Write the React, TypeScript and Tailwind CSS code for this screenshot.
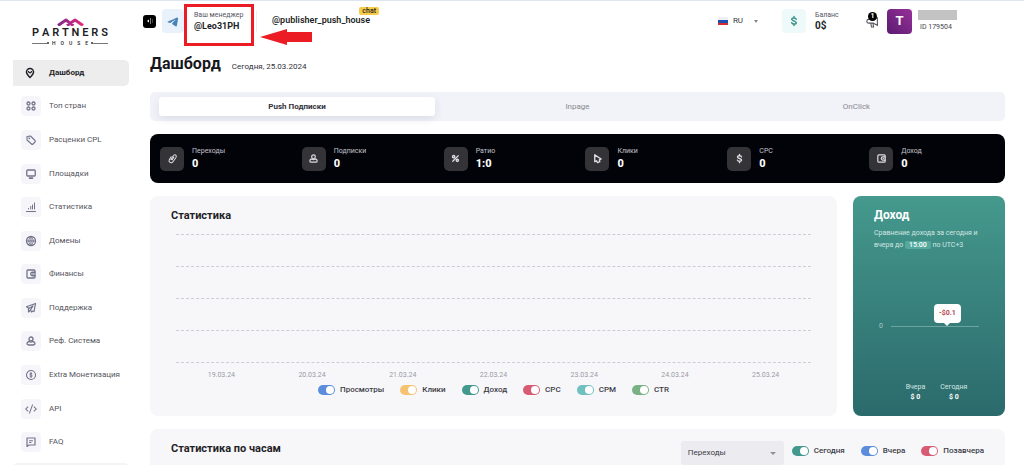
import { useState, type ReactNode } from 'react';
import { RiCodeSSlashLine, RiTelegram2Fill } from 'react-icons/ri';
import clsx from 'clsx';

type IconProps = { className?: string };

function Icon({ className, children }: { className?: string; children: ReactNode }) {
  return (
    <svg
      viewBox="0 0 24 24"
      fill="none"
      stroke="currentColor"
      strokeWidth="2.6"
      strokeLinecap="round"
      strokeLinejoin="round"
      className={className}
      aria-hidden="true"
    >
      {children}
    </svg>
  );
}

const PinIcon = (p: IconProps) => (
  <Icon {...p}>
    <path d="M12 21C8 17 5 14 5 10a7 7 0 0 1 14 0c0 4-3 7-7 11z" strokeWidth="3" />
    <path d="M9 9c1 3.500 5 3.500 6 0" />
  </Icon>
);

const GridIcon = (p: IconProps) => (
  <Icon {...p}>
    <circle cx="7" cy="7" r="3" />
    <circle cx="17" cy="7" r="3" />
    <circle cx="7" cy="17" r="3" />
    <circle cx="17" cy="17" r="3" />
  </Icon>
);

const TagIcon = (p: IconProps) => (
  <Icon {...p}>
    <path d="M4 5l7-1 9 9c1 1 1 2 0 3l-4 4c-1 1-2 1-3 0l-9-8z" strokeWidth="2.200" />
    <path d="m8 8 1 1" />
  </Icon>
);

const MonitorIcon = (p: IconProps) => (
  <Icon {...p}>
    <rect x="3.500" y="4" width="17" height="12" rx="2" />
    <path d="M9 20h6" strokeWidth="3.500" />
  </Icon>
);

const BarsIcon = (p: IconProps) => (
  <Icon {...p}>
    <path d="M3 21h18M7 15v1M11.500 11v5M15 8v8M19 4v12" strokeWidth="2" />
  </Icon>
);

const GlobeIcon = (p: IconProps) => (
  <Icon {...p}>
    <circle cx="12" cy="12" r="9" />
    <path d="M3 12h18M12 3v18M12 3c-6 5-6 13 0 18M12 3c6 5 6 13 0 18" strokeWidth="2" />
  </Icon>
);

const WalletIcon = (p: IconProps) => (
  <Icon {...p}>
    <rect x="4" y="4" width="16" height="16" rx="2" />
    <path d="M20 8.500h-5a3.500 3.500 0 0 0 0 7h5M15.500 12h1" />
  </Icon>
);

const PlaneIcon = (p: IconProps) => (
  <Icon {...p}>
    <path d="M21 3 3 9.500l5 3.500 8-5-5 8 2 4 3-2 2 1z" strokeWidth="2.400" />
    <path d="M7 14v6l3-3" strokeWidth="2.400" />
  </Icon>
);

const UserIcon = (p: IconProps) => (
  <Icon {...p}>
    <circle cx="12" cy="8" r="4" />
    <path d="M8.500 13c-3 .5-4.500 2-4.500 4.200 0 2 1.200 2.800 3.500 2.800h9c2.300 0 3.500-.8 3.500-2.800 0-2.200-1.500-3.700-4.500-4.200-2 1.500-5 1.500-7 0z" />
  </Icon>
);

const CoinIcon = (p: IconProps) => (
  <Icon {...p}>
    <circle cx="12" cy="12" r="9" strokeWidth="2.200" />
    <path d="M14.500 9.500c-1-1.500-5-1.500-5 .6 0 2.200 5 1.500 5 3.800 0 2.200-4 2.200-5 .6M12 7v10" strokeWidth="2" />
  </Icon>
);

const ChatIcon = (p: IconProps) => (
  <Icon {...p}>
    <path d="M4 4h16v14H8l-4 3z" strokeWidth="2.400" />
    <path d="M9 9.500h6M9 13h3" strokeWidth="2" />
  </Icon>
);

const LinkIcon = (p: IconProps) => (
  <Icon {...p}>
    <path d="m9 14 4-7c2-3 4-4 6-3 2 2 2 4 0 7l-6 8c-2 3-5 3-7 1-2-1-2-3-1-5l4-7" strokeWidth="2.200" />
    <path d="m9 14 2 1 4-6" strokeWidth="2.200" />
  </Icon>
);

const PercentIcon = (p: IconProps) => (
  <Icon {...p}>
    <path d="m18 6-12 12" />
    <circle cx="8" cy="8" r="2.500" strokeWidth="3" />
    <circle cx="16" cy="16" r="2.500" strokeWidth="3" />
  </Icon>
);

const CursorIcon = (p: IconProps) => (
  <Icon {...p}>
    <path d="M6 4v15l4-2 2 4 5-2-1-4 4-2z" strokeWidth="3" />
  </Icon>
);

const DollarIcon = (p: IconProps) => (
  <Icon {...p}>
    <path d="M16.500 8.500c-1-3.500-9-3.500-9 0s9 3.500 9 7-8 3.500-9 0M12 3v3M12 18v3" strokeWidth="3" />
  </Icon>
);

const navItems = [
  { label: 'Топ стран', icon: GridIcon },
  { label: 'Расценки CPL', icon: TagIcon },
  { label: 'Площадки', icon: MonitorIcon },
  { label: 'Статистика', icon: BarsIcon },
  { label: 'Домены', icon: GlobeIcon },
  { label: 'Финансы', icon: WalletIcon },
  { label: 'Поддержка', icon: PlaneIcon },
  { label: 'Реф. Система', icon: UserIcon },
  { label: 'Extra Монетизация', icon: CoinIcon },
  { label: 'API', icon: RiCodeSSlashLine },
  { label: 'FAQ', icon: ChatIcon },
];

const tabs = ['Push Подписки', 'Inpage', 'OnClick'];

const totals = [
  { label: 'Переходы', value: '0', icon: LinkIcon },
  { label: 'Подписки', value: '0', icon: UserIcon },
  { label: 'Ратио', value: '1:0', icon: PercentIcon },
  { label: 'Клики', value: '0', icon: CursorIcon },
  { label: 'CPC', value: '0', icon: DollarIcon },
  { label: 'Доход', value: '0', icon: WalletIcon },
];

const dates = ['19.03.24', '20.03.24', '21.03.24', '22.03.24', '23.03.24', '24.03.24', '25.03.24'];

const series = [
  { label: 'Просмотры', color: 'bg-[#5c8ddc]' },
  { label: 'Клики', color: 'bg-[#f6c271]' },
  { label: 'Доход', color: 'bg-[#43998e]' },
  { label: 'CPC', color: 'bg-[#d75c73]' },
  { label: 'CPM', color: 'bg-[#70c0c0]' },
  { label: 'CTR', color: 'bg-[#79b184]' },
];

const days = [
  { label: 'Сегодня', color: 'bg-[#43998e]' },
  { label: 'Вчера', color: 'bg-[#5c8ddc]' },
  { label: 'Позавчера', color: 'bg-[#d75c73]' },
];

function Toggle({ label, color }: { label: string; color: string }) {
  const [on, setOn] = useState(true);
  return (
    <label className="flex cursor-pointer items-center gap-[5px] text-[8px] leading-[12px] font-medium text-[#3c3c46]">
      <input
        type="checkbox"
        role="switch"
        checked={on}
        onChange={(e) => setOn(e.target.checked)}
        className="peer sr-only"
      />
      <span
        className={clsx(
          'flex h-[10px] w-[17px] items-center rounded-full px-px',
          on ? 'justify-end' : 'justify-start',
          on ? color : 'bg-gray-300'
        )}
      >
        <span className="size-[8px] rounded-full bg-white" />
      </span>
      {label}
    </label>
  );
}

function Logo() {
  return (
    <a href="#" className="mx-auto flex w-[80px] flex-col items-center text-[#1d1d26]">
      <svg viewBox="0 0 54 16" className="h-[8px] w-[27px]" fill="none" aria-hidden="true">
        <defs>
          <linearGradient id="roof" x1="0" x2="54" y1="0" y2="0" gradientUnits="userSpaceOnUse">
            <stop stopColor="#7b2a8e" />
            <stop offset="1" stopColor="#ec2a7b" />
          </linearGradient>
        </defs>
        <path
          d="M2 15 18 4l10 8M20 15 36 4l16 11M28 12l5 3"
          stroke="url(#roof)"
          strokeWidth="6"
          strokeLinejoin="round"
        />
      </svg>
      <span className="flex w-[76px] justify-between text-[11px] leading-[14px] font-semibold">
        {'PARTNERS'.split('').map((c, i) => (
          <span key={i}>{c}</span>
        ))}
      </span>
      <span className="flex w-[76px] items-center text-[5px] leading-[6px] font-medium">
        <span className="h-px flex-1 bg-[#777]" />
        <span className="size-[2px] rounded-full bg-[#333]" />
        <span className="flex w-[42px] justify-between px-[3px]">
          {'HOUSE'.split('').map((c, i) => (
            <span key={i}>{c}</span>
          ))}
        </span>
        <span className="size-[2px] rounded-full bg-[#333]" />
        <span className="h-px flex-1 bg-[#777]" />
      </span>
    </a>
  );
}

function Sidebar() {
  return (
    <aside className="w-[150px] shrink-0 pt-[17px] pr-[21px] pl-[13px]">
      <div className="flex h-[38px] items-start pr-[2px]">
        <Logo />
      </div>
      <nav>
        <ul className="grid min-h-[403px] auto-rows-fr items-center">
          <li>
            <a
              href="#"
              className="flex h-[26px] items-center gap-[13px] rounded-r-[5px] bg-[#ededed] pl-[11px] text-[8px] font-bold text-[#1f1f27]"
            >
              <PinIcon className="size-[12px]" />
              Дашборд
            </a>
          </li>
          {navItems.map(({ label, icon: ItemIcon }) => (
            <li key={label}>
              <a href="#" className="flex items-center gap-[8px] pl-[8px] text-[8px] whitespace-nowrap text-[#55555c]">
                <span className="flex size-[20px] items-center justify-center rounded-[4px] bg-[#f6f6fa] text-[#72738a]">
                  <ItemIcon className="size-[12px]" />
                </span>
                {label}
              </a>
            </li>
          ))}
        </ul>
      </nav>
      <div className="mt-[4px] h-[26px] rounded-[5px] bg-[#f4f4f6]" />
    </aside>
  );
}

function Header() {
  return (
    <header className="-ml-[7px] flex h-[50px] items-center pb-[10px]">
      <button
        type="button"
        aria-label="Меню"
        className="flex size-[13px] items-center justify-center rounded-[3px] bg-black text-white"
      >
        <svg viewBox="0 0 16 16" className="size-[8px]" fill="currentColor" aria-hidden="true">
          <path d="m2 8 4-3v6zM8 3h2v2H8zM8 7h2v2H8zM8 11h2v2H8zM12 5h1v2h-1zM12 9h1v2h-1z" />
        </svg>
      </button>
      <div className="relative ml-[6px] flex items-center">
        <span className="flex h-[24px] w-[22px] items-center justify-center rounded-[4px] bg-[#e9f1fa] text-[#4682b8]">
          <RiTelegram2Fill className="size-[13px]" />
        </span>
        <span className="ml-[10px] w-[63px] border-r border-[#eeeef2] text-[#1f1f27]">
          <span className="block text-[7px] leading-[9px] text-[#55555f]">Ваш менеджер</span>
          <a href="#" className="block text-[9px] leading-[12px] font-bold">
            @Leo31PH
          </a>
        </span>
        <span className="absolute -top-[5px] left-[22px] h-[42px] w-[70px] border-[3px] border-[#ec1c24]" />
        <svg viewBox="0 0 52 16" className="absolute top-[20px] left-[98px] h-[16px] w-[52px]" aria-hidden="true">
          <path d="M0 8 27 0v3h25v10H27v3z" fill="#ec1c24" />
        </svg>
      </div>
      <a href="#" className="relative ml-[15px] text-[9px] font-semibold text-[#1f1f27]">
        @publisher_push_house
        <span className="absolute -top-[7px] -right-[9px] rounded-[2px] bg-[#f7cb45] px-[3px] text-[7px] leading-[8px] font-medium">
          chat
        </span>
      </a>

      <button type="button" className="ml-auto flex items-center text-[8px] text-[#33333b]">
        <svg viewBox="0 0 10 8" className="mr-[5px] h-[8px] w-[10px]" aria-hidden="true">
          <path d="M0 0h10v3H0z" fill="#eef0f5" />
          <path d="M0 3h10v3H0z" fill="#1d4fae" />
          <path d="M0 6h10v2H0z" fill="#d62a2f" />
        </svg>
        RU
        <span className="ml-[11px] border-x-[2px] border-t-[3px] border-x-transparent border-t-[#888]" />
      </button>
      <span className="ml-[24px] flex size-[24px] items-center justify-center rounded-[4px] bg-[#eefaf9] text-[#3c958b]">
        <DollarIcon className="size-[12px]" />
      </span>
      <span className="ml-[9px] w-[51px] text-[#1f1f27]">
        <span className="block text-[7px] leading-[9px] text-[#55555f]">Баланс</span>
        <span className="block text-[10px] leading-[12px] font-bold">0$</span>
      </span>
      <button type="button" aria-label="Уведомления" className="relative text-[#55555c]">
        <svg viewBox="0 0 24 24" className="size-[13px]" fill="none" stroke="currentColor" strokeWidth="2" aria-hidden="true">
          <path d="M21 5v14l-8-4H5a3 3 0 0 1 0-7h8zM9 15l1 7h4l-1-6" />
        </svg>
        <span className="absolute -top-[3px] left-[2px] flex size-[9px] items-center justify-center rounded-full bg-black text-[7px] leading-none font-bold text-white">
          1
        </span>
      </button>
      <span className="ml-[8px] flex size-[25px] items-center justify-center rounded-[4px] bg-linear-to-bl from-[#98309a] to-[#5b1b70] text-[13px] font-bold text-white">
        T
      </span>
      <span className="ml-[6px] w-[87px]">
        <span className="block h-[10px] w-[39px] bg-[#c3c3c3]" />
        <span className="block pt-[2px] pl-[2px] text-[7px] leading-[10px] text-[#44444c]">ID 179504</span>
      </span>
    </header>
  );
}

function StatsCard() {
  return (
    <section className="min-w-0 flex-1 rounded-[8px] bg-[#f7f7fa] px-[21px] pt-[12px] pb-[20px]">
      <h2 className="text-[11px] leading-[15px] font-bold text-[#1f1f27]">Статистика</h2>
      <div className="mx-[5px] mt-[11px] flex flex-col gap-[31px]">
        {[0, 1, 2, 3, 4].map((n) => (
          <div key={n} className="border-t border-dashed border-[#cdcdd4]" />
        ))}
      </div>
      <ol className="mx-[5px] mt-[7px] grid grid-cols-7 text-center text-[7px] leading-[10px] text-[#9a9aa5]">
        {dates.map((d) => (
          <li key={d}>{d}</li>
        ))}
      </ol>
      <div className="mt-[4px] flex justify-center gap-[16px]">
        {series.map((s) => (
          <Toggle key={s.label} {...s} />
        ))}
      </div>
    </section>
  );
}

function IncomeCard() {
  return (
    <section className="flex w-[152px] shrink-0 flex-col rounded-[8px] bg-linear-to-b from-[#45998d] to-[#2b6a6c] px-[21px] pt-[12px] pb-[14px] text-white">
      <h2 className="text-[12px] leading-[15px] font-bold">Доход</h2>
      <p className="mt-[4px] text-[7px] leading-[12px] whitespace-nowrap text-[#d3e6e3]">
        Сравнение дохода за сегодня и
        <br />
        вчера до <span className="rounded-[2px] bg-[#55aa9e] px-[4px] font-medium text-white">15:00</span> по UTC+3
      </p>
      <div className="mt-[70px] flex items-center gap-[8px] pl-[5px] text-[7px] leading-[10px] text-[#a5cac6]">
        0
        <div className="relative h-px w-[88px] bg-[#6ba5a1]">
          <div className="absolute bottom-[4px] left-[43px] flex h-[19px] w-[27px] items-center justify-center rounded-[4px] bg-white text-[7px] font-bold text-[#b5494e]">
            -$0.1
            <span className="absolute top-full border-x-[3px] border-t-[3px] border-x-transparent border-t-white" />
          </div>
        </div>
      </div>
      <dl className="mt-auto flex justify-center gap-[15px] pl-[15px] text-center text-[7px] leading-[10px]">
        <div>
          <dt className="text-[#d3e6e3]">Вчера</dt>
          <dd className="font-bold">$ 0</dd>
        </div>
        <div>
          <dt className="text-[#d3e6e3]">Сегодня</dt>
          <dd className="font-bold">$ 0</dd>
        </div>
      </dl>
    </section>
  );
}

export default function App() {
  const [tab, setTab] = useState(tabs[0]);

  return (
    <div className="flex h-screen overflow-hidden border-t border-[#dbe6f1] bg-white font-[Roboto,sans-serif]">
      <Sidebar />
      <main className="min-w-0 flex-1 pr-[19px]">
        <Header />
        <div className="flex items-baseline gap-[11px]">
          <h1 className="text-[16px] leading-[26px] font-bold text-[#17171d]">Дашборд</h1>
          <span className="text-[8px] text-[#33333b]">Сегодня, 25.03.2024</span>
        </div>

        <div role="tablist" className="mt-[15px] grid grid-cols-3 rounded-[5px] bg-[#f2f3f9] px-[9px] py-[5px]">
          {tabs.map((name) => (
            <button
              key={name}
              type="button"
              role="tab"
              aria-selected={tab === name}
              onClick={() => setTab(name)}
              className={clsx(
                'h-[19px] rounded-[3px] text-[8px]',
                tab === name
                  ? 'mr-[3px] bg-white font-bold text-[#33333b] shadow-[0_3px_8px_rgba(60,60,100,0.12)]'
                  : 'text-[#88888f]'
              )}
            >
              {name}
            </button>
          ))}
        </div>

        <div className="mt-[13px] grid grid-cols-6 rounded-[8px] bg-[#020209] px-[2px] py-[12px]">
          {totals.map(({ label, value, icon: ItemIcon }) => (
            <div key={label} className="flex items-center gap-[8px] pl-[8px]">
              <span className="flex size-[24px] items-center justify-center rounded-[5px] bg-[#333338] text-[#dcdce2]">
                <ItemIcon className="size-[11px]" />
              </span>
              <span>
                <span className="block text-[7px] leading-[10px] text-[#c4c4ca]">{label}</span>
                <span className="block text-[11px] leading-[15px] font-extrabold text-white">{value}</span>
              </span>
            </div>
          ))}
        </div>

        <div className="mt-[13px] flex gap-[16px]">
          <StatsCard />
          <IncomeCard />
        </div>

        <section className="mt-[13px] flex items-start rounded-[8px] bg-[#f7f7fa] px-[21px] pt-[12px] pb-[60px]">
          <h2 className="mr-auto text-[11px] leading-[15px] font-bold text-[#1f1f27]">Статистика по часам</h2>
          <div className="relative mr-[8px] flex">
            <select
              aria-label="Показатель"
              className="h-[24px] w-[103px] appearance-none rounded-[3px] bg-[#ececf0] px-[7px] text-[8px] text-[#3c3c46]"
            >
              <option>Переходы</option>
              <option>Подписки</option>
              <option>Клики</option>
            </select>
            <span className="pointer-events-none absolute top-[11px] right-[8px] border-x-[3px] border-t-[3px] border-x-transparent border-t-[#8f8f98]" />
          </div>
          <div className="flex gap-[16px] py-[4px]">
            {days.map((d) => (
              <Toggle key={d.label} {...d} />
            ))}
          </div>
        </section>
      </main>
    </div>
  );
}
